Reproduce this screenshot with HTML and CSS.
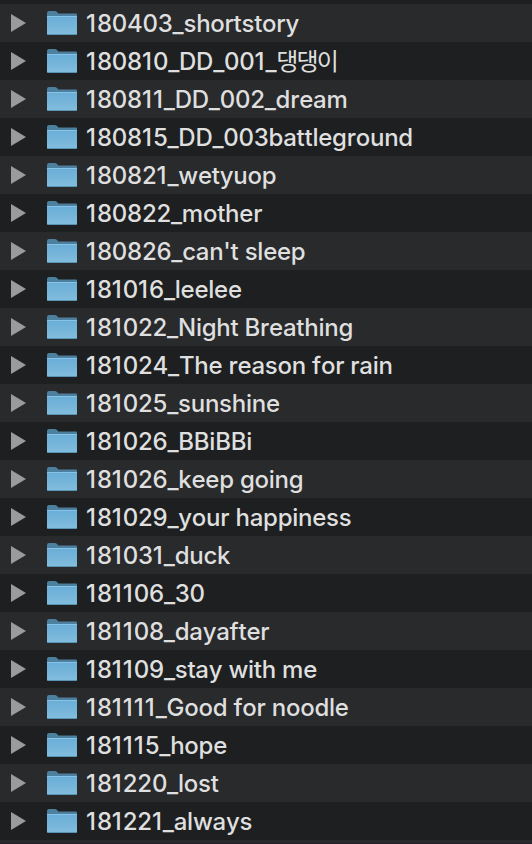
FILE: index.html
```
<!DOCTYPE html>
<html lang="ko">
<head>
  <meta charset="UTF-8">
  <meta name="viewport" content="width=device-width, initial-scale=1.0">
  <title>Folders</title>
  <link rel="stylesheet" href="styles.css">
</head>
<body>
  <svg width="0" height="0" class="defs">
    <defs>
      <linearGradient id="front" x1="0" y1="0" x2="0" y2="1">
        <stop offset="0" stop-color="#69add7"/>
        <stop offset="1" stop-color="#82bddd"/>
      </linearGradient>
    </defs>
  </svg>
  <ul class="file-list" id="fileList"></ul>
  <div class="list-end"></div>

  <script src="script.js"></script>
</body>
</html>
```
FILE: styles.css
```
body {
  margin: 0;
  background-color: #1e1f21;
  font-family: Inter, "Noto Sans CJK KR", sans-serif;
  overflow: hidden;
}
.defs {
  display: block;
}
.file-list {
  list-style: none;
  margin: 0;
  padding: 4px 0 0;
}
.row {
  display: flex;
  align-items: center;
  height: 38px;
  padding-left: 10px;
  color: #dfdfdf;
}
.row:nth-child(odd) {
  background-color: #292a2c;
}
.arrow {
  width: 17px;
  height: 20px;
  margin-right: 19px;
}
.folder {
  width: 32px;
  height: 28px;
  margin-right: 8px;
}
.name {
  padding-top: 2px;
  font-size: 24px;
  font-weight: 500;
  font-kerning: none;
  letter-spacing: -0.25px;
  line-height: 36px;
  white-space: pre;
}
.one {
  letter-spacing: 1px;
}
.hangul {
  font-weight: 400;
  letter-spacing: -1.8px;
}
.list-end {
  height: 3px;
  background-color: #292a2c;
  border-bottom: 1px solid #251d29;
}
```
FILE: script.js
```
const names = [
  "180403_shortstory",
  "180810_DD_001_댕댕이",
  "180811_DD_002_dream",
  "180815_DD_003battleground",
  "180821_wetyuop",
  "180822_mother",
  "180826_can't sleep",
  "181016_leelee",
  "181022_Night Breathing",
  "181024_The reason for rain",
  "181025_sunshine",
  "181026_BBiBBi",
  "181026_keep going",
  "181029_your happiness",
  "181031_duck",
  "181106_30",
  "181108_dayafter",
  "181109_stay with me",
  "181111_Good for noodle",
  "181115_hope",
  "181220_lost",
  "181221_always"
];

// the narrow 1 and the hangul need their own spacing
const spaced = name => name
  .replace(/1/g, '<span class="one">1</span>')
  .replace(/[가-힣]+/g, '<span class="hangul">$&</span>');

document.getElementById('fileList').innerHTML = names.map(name => `
  <li class="row">
    <svg class="arrow" viewBox="0 0 17 20"><path d="M1 1L16 10L1 19Z" fill="#9b9b9c"/></svg>
    <svg class="folder" viewBox="0 0 32 28">
      <path d="M1 4Q1 2 3 2H9Q10 2 11 3L12.500 4.500H30Q31 4.500 31 5.500V24H1Z" fill="#4d7f9e"/>
      <path d="M1 7H31V24.500Q31 26 29.500 26H2.500Q1 26 1 24.500Z" fill="url(#front)"/>
      <path d="M1 7.500H31" stroke="#86c3e6"/>
      <path d="M2 25.500H30" stroke="#5a95b8"/>
    </svg>
    <span class="name">${spaced(name)}</span>
  </li>`).join('');
```
